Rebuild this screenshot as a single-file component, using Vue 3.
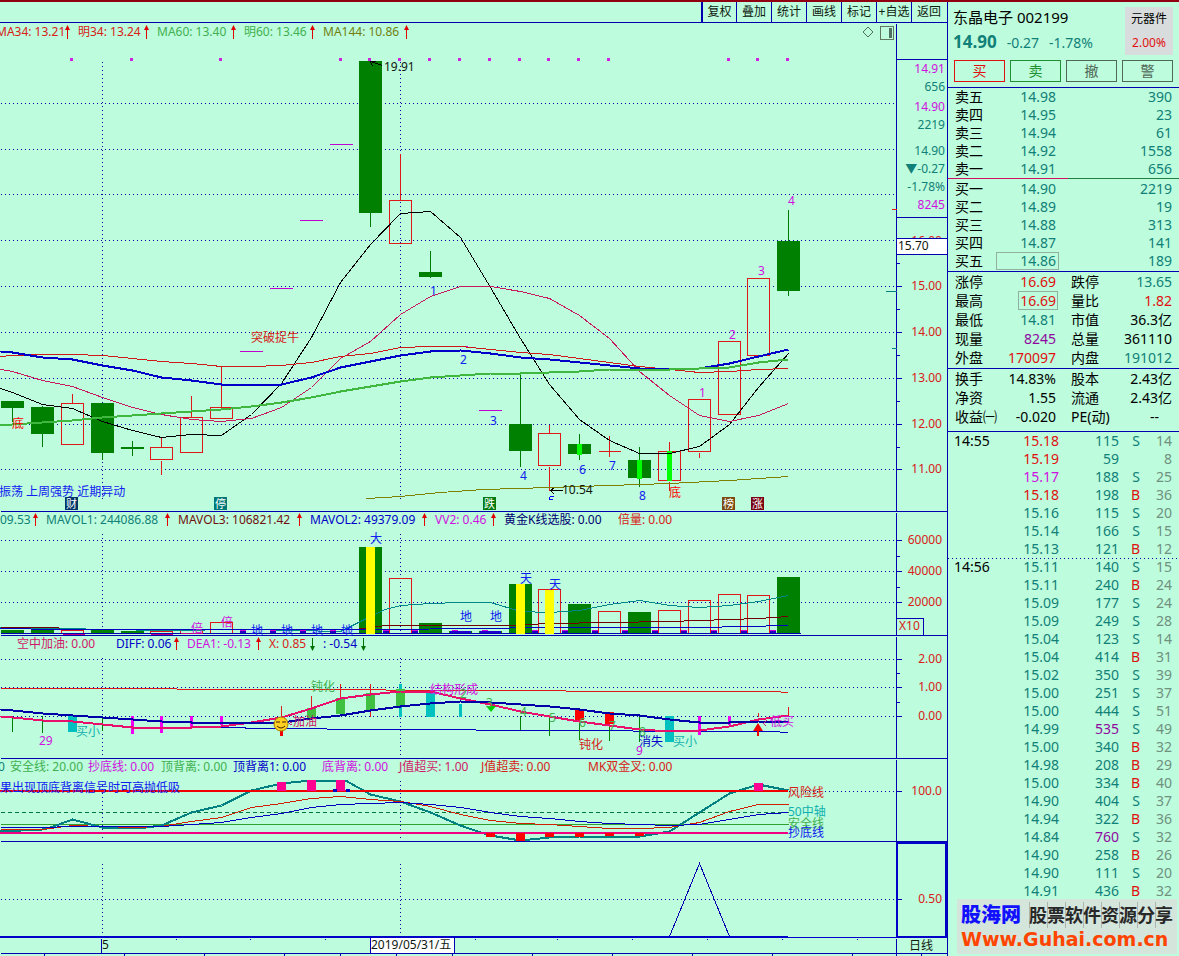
<script setup>
const tools = ['复权', '叠加', '统计', '画线', '标记', '+自选', '返回']

const xs = [12, 42, 72, 102, 132, 161, 191, 221, 251, 281, 311, 340, 370, 400, 430, 460, 490, 520, 549, 579, 609, 639, 669, 699, 729, 758, 788]
const path = (ys, start) => 'M' + (start === undefined ? '' : `0 ${start} L`) + ys.map((y, i) => `${xs[i]} ${y}`).join(' L')
const poly = (pts) => pts.map((p) => p.join(',')).join(' ')

/* centre, body top, body bottom, high, low, up */
const candles = [
  [12, 401, 408, 401, 421, 0], [42, 407, 434, 405, 446, 0], [72, 403, 445, 393, 445, 1], [102, 403, 453, 403, 459, 0],
  [132, 447, 449, 440, 455, 0], [161, 447, 460, 437, 474, 1], [191, 417, 453, 395, 453, 1], [221, 407, 419, 365, 419, 1],
  [370, 61, 213, 61, 226, 0], [400, 200, 244, 153, 244, 1], [430, 272, 277, 250, 277, 0], [520, 424, 451, 373, 466, 0],
  [549, 433, 466, 424, 490, 1], [579, 444, 454, 433, 459, 0], [639, 460, 478, 446, 486, 0],
  [669, 451, 481, 441, 490, 1], [699, 399, 452, 399, 457, 1], [729, 341, 415, 341, 415, 1], [758, 278, 356, 278, 356, 1],
  [788, 241, 291, 209, 295, 0],
].map(([x, t, b, h, l, up]) => ({ x, t, b, h, l, up }))
const limes = [[579, 444, 11], [639, 460, 19], [669, 451, 30]]
const gaps = [[240, 351, 23], [270, 288, 23], [300, 220, 23], [330, 144, 23], [449, 346, 19], [479, 410, 23]]
const marks = [71, 131, 220, 340, 369, 399, 429, 459, 489, 519, 548, 578, 608, 728, 757, 787]

const maBlack = path([392, 404, 408, 421, 430, 437, 434, 435, 414, 383, 337, 282, 244, 213, 211, 237, 287, 338, 384, 419, 440, 453, 453, 446, 424, 387, 353], 388)
const maRose = path([371, 380, 386, 397, 407, 414, 419, 421, 418, 407, 387, 358, 341, 314, 296, 286, 286, 291, 298, 315, 338, 371, 395, 415, 421, 415, 403], 369)
const maRed = path([355, 354, 354, 355, 358, 361, 363, 366, 366, 365, 362, 356, 353, 347, 346, 346, 349, 352, 354, 358, 362, 366, 369, 372, 371, 369, 368], 356)
const maBlue = path([352, 357, 359, 365, 370, 377, 380, 384, 384, 384, 377, 367, 361, 355, 351, 350, 353, 357, 359, 362, 365, 368, 369, 368, 363, 356, 349], 351)
const maGreen = path([424, 422, 420, 417, 415, 413, 411, 409, 406, 402, 397, 391, 386, 381, 377, 375, 373, 373, 372, 371, 369, 369, 369, 368, 367, 362, 359], 425)
const maOlive = poly([[366, 498], [400, 496], [440, 492], [483, 489], [549, 487], [639, 484], [669, 483], [729, 480], [758, 478], [788, 476]])

const priceGrid = [103, 149, 194, 240, 286, 332, 378, 424, 469]
const priceLabels = [[286, '15.00'], [332, '14.00'], [378, '13.00'], [424, '12.00'], [469, '11.00']]
const quote = [[73, '14.91', 'mg'], [91, '656', 'tl'], [111, '14.90', 'mg'], [129, '2219', 'tl'], [155, '14.90', 'tl'], [173, '▼-0.27', 'tl'], [191, '-1.78%', 'tl'], [209, '8245', 'mg']]

/* text x, text, colour class, arrow x, arrow direction */
const legend1 = [
  [-4, 'MA34: 13.21', 'rd', 67], [78, '明34: 13.24', 'rd', 146], [157, 'MA60: 13.40', 'gn', 233],
  [244, '明60: 13.46', 'gn', 312], [323, 'MA144: 10.86', 'ol', 406],
]
const legend2 = [
  [0, '09.53', 'tl', 35], [46, 'MAVOL1: 244086.88', 'tl', 167], [178, 'MAVOL3: 106821.42', 'mr', 299],
  [310, 'MAVOL2: 49379.09', 'bl', 424], [435, 'VV2: 0.46', 'mg', 493], [504, '黄金K线选股: 0.00', 'nv'], [618, '倍量: 0.00', 'rd'],
]
const legend3 = [
  [17, '空中加油: 0.00', 'rs'], [116, 'DIFF: 0.06', 'bl', 176], [187, 'DEA1: -0.13', 'mg', 258], [269, 'X: 0.85', 'rd', 312, 1], [323, ': -0.54', 'bl', 363, 1],
]
const legend4 = [
  [-2, '0', 'tl'], [10, '安全线: 20.00', 'gn'], [88, '抄底线: 0.00', 'mg'], [161, '顶背离: 0.00', 'gn'], [233, '顶背离1: 0.00', 'bl'],
  [322, '底背离: 0.00', 'mg'], [399, 'J值超买: 1.00', 'rs'], [481, 'J值超卖: 0.00', 'rd'], [588, 'MK双金叉: 0.00', 'rd'],
]

const labels1 = [
  [251, 342, '突破捉牛', 'rd'], [430, 295, '1', 'bb'], [460, 364, '2', 'bb'], [490, 425, '3', 'bb'], [520, 480, '4', 'bb'],
  [579, 474, '6', 'bb'], [609, 470, '7', 'bb'], [639, 500, '8', 'bb'], [699, 397, '1', 'mg'], [729, 339, '2', 'mg'],
  [758, 275, '3', 'mg'], [788, 205, '4', 'mg'], [12, 428, '底', 'br'], [669, 497, '底', 'br'],
  [-1, 496, '振荡 上周强势 近期异动', 'bb'], [384, 71, '19.91', 'bk'], [562, 494, '10.54', 'bk'],
]
const badges = [[65, '财', '#003366'], [214, '停', '#007878'], [483, '跌', '#007a10'], [722, '榜', '#7b4a10'], [751, '涨', '#780010']]

/* centre, top, up */
const volumes = [
  [12, 630, 0], [42, 628, 0], [72, 630, 1], [102, 630, 0], [132, 631, 0], [161, 631, 1], [191, 629, 1], [221, 622, 1],
  [370, 547, 0], [400, 578, 1], [430, 623, 0], [460, 631, 0], [490, 631, 0], [520, 584, 0], [549, 589, 1], [579, 604, 0],
  [609, 611, 1], [639, 612, 0], [669, 610, 1], [699, 600, 1], [729, 594, 1], [758, 595, 1], [788, 577, 0],
]
const volYellow = [[366, 547], [516, 584], [545, 590]]
const volTeal = poly([[0, 627], [60, 628], [160, 630], [250, 629], [340, 631], [352, 625], [370, 616], [385, 609], [400, 605], [430, 603], [460, 602], [490, 602], [520, 611], [549, 612], [579, 610], [609, 604], [639, 600], [669, 605], [699, 607], [729, 605], [758, 601], [788, 595]])
const volMaroon = poly([[0, 627], [58, 627], [60, 629], [355, 629], [385, 625], [505, 625], [549, 623], [609, 622], [669, 621], [699, 620], [729, 619], [758, 618], [788, 616]])
const volBlue = poly([[0, 628], [60, 629], [360, 629], [500, 628], [520, 627], [700, 627], [788, 625]])
const volDashes = [240, 270, 300, 330, 383, 412, 452, 482, 532, 562, 592, 622, 652, 681, 711, 741, 770]
const labels2 = [
  [370, 543, '大', 'bb'], [520, 583, '天', 'bb'], [549, 589, '天', 'bb'], [460, 621, '地', 'bb'], [490, 621, '地', 'bb'],
  [251, 635, '地', 'bb'], [281, 635, '地', 'bb'], [311, 635, '地', 'bb'], [341, 635, '地', 'bb'], [191, 633, '倍', 'mg'], [221, 627, '倍', 'mg'],
]

/* x, y, width, height, fill */
const bars3 = [
  [12, 716, 1, 16, '#008000'], [42, 716, 1, 17, '#008000'], [102, 716, 1, 15, '#008000'], [520, 716, 1, 14, '#008000'],
  [549, 716, 1, 20, '#008000'], [579, 716, 1, 24, '#008000'], [609, 716, 1, 25, '#008000'], [639, 716, 1, 26, '#008000'],
  [68, 716, 9, 16, '#00c0c0'], [426, 692, 9, 25, '#00c0c0'], [459, 704, 3, 13, '#00c0c0'], [665, 716, 9, 26, '#00c0c0'],
  [131, 716, 3, 18, '#f000f0'], [160, 716, 3, 17, '#f000f0'], [190, 716, 3, 12, '#f000f0'], [220, 716, 3, 9, '#f000f0'],
  [698, 716, 3, 19, '#f000f0'], [728, 716, 3, 9, '#f000f0'], [307, 708, 9, 10, '#40c040'], [336, 698, 9, 16, '#40c040'],
  [366, 693, 9, 17, '#40c040'], [399, 684, 3, 33, '#00c0c0'], [396, 689, 9, 17, '#40c040'], [575, 709, 9, 11, '#ff0000'],
  [605, 712, 9, 12, '#ff0000'], [281, 706, 1, 12, '#e02020'], [311, 696, 1, 12, '#e02020'], [340, 684, 1, 14, '#e02020'],
  [370, 684, 1, 9, '#e02020'], [370, 710, 1, 7, '#e02020'], [788, 707, 1, 9, '#e02020'], [758, 713, 1, 4, '#e02020'],
]
const diff = path([717, 720, 721, 724, 727, 727, 727, 726, 722, 717, 708, 698, 694, 691, 691, 698, 704, 711, 716, 721, 725, 729, 731, 730, 726, 719, 715], 716)
const dea = path([710, 713, 715, 717, 719, 721, 722, 722, 722, 722, 718, 715, 710, 706, 703, 701, 702, 704, 706, 709, 713, 715, 719, 722, 722, 721, 721], 709)
const upperLine = poly([[0, 688], [176, 688], [177, 689], [385, 689], [386, 690], [565, 690], [566, 691], [772, 691], [788, 692]])
const lowerLine = poly([[161, 727], [326, 728], [327, 729], [475, 729], [476, 730], [625, 730], [640, 731], [770, 731], [788, 732]])
const labels3 = [
  [311, 691, '钝化', 'gn'], [76, 736, '买小', 'cy'], [39, 745, '29', 'mg'], [293, 726, '加油', 'rs'], [430, 694, '结构形成', 'mg'],
  [460, 698, '2', 'gn'], [486, 707, '3', 'gn'], [520, 716, '4', 'gn'], [549, 722, '5', 'gn'], [579, 727, '6', 'gn'], [609, 730, '7', 'gn'],
  [639, 736, '8', 'gn'], [636, 755, '9', 'mg'], [579, 749, '钝化', 'rd'], [639, 746, '消失', 'bl'], [673, 746, '买小', 'cy'], [770, 726, '低买', 'mg'],
]

const kTeal = poly([[0, 831], [42, 829], [50, 827], [72, 819], [102, 827], [145, 827], [161, 825], [191, 812], [221, 805], [251, 790], [281, 783], [311, 780], [345, 780], [370, 794], [400, 801], [430, 812], [460, 825], [480, 832], [490, 835], [520, 840], [549, 837], [579, 836], [639, 836], [669, 831], [699, 812], [729, 793], [758, 784], [788, 790]])
const kRed = path([829, 829, 825, 826, 827, 826, 821, 817, 807, 803, 798, 796, 799, 801, 806, 814, 820, 823, 824, 826, 828, 828, 827, 822, 811, 804, 804], 829)
const kBlue = path([827, 827, 826, 826, 826, 826, 824, 822, 817, 813, 807, 804, 803, 802, 804, 807, 812, 816, 818, 821, 823, 824, 825, 824, 819, 814, 812], 827)
const bars4 = [
  [277, 782, 9, 9, '#ff0090'], [307, 780, 9, 11, '#ff0090'], [336, 780, 9, 11, '#ff0090'], [754, 783, 9, 8, '#ff0090'],
  [333, 789, 4, 3, '#0000c0'], [346, 789, 4, 3, '#0000c0'], [486, 833, 9, 4, '#ff0000'], [516, 833, 9, 8, '#ff0000'], [545, 833, 9, 4, '#ff0000'],
  [575, 833, 9, 4, '#ff0000'], [605, 833, 9, 3, '#ff0000'], [635, 833, 9, 3, '#ff0000'],
]
const labels4 = [
  [0, 792, '果出现顶底背离信号时可高抛低吸', 'bb'], [788, 797, '风险线', 'rd'], [788, 816, '50中轴', 'cy'], [788, 828, '安全线', 'gn'], [788, 837, '抄底线', 'bb'],
]
const dayTicks = [176, 250, 325, 475, 557, 632, 707, 782, 857]
const footTicks = [44, 124, 204, 284, 340, 396, 452, 532, 612, 692, 772, 852, 921]

const sells = [['卖五', '14.98', 390], ['卖四', '14.95', 23], ['卖三', '14.94', 61], ['卖二', '14.92', 1558], ['卖一', '14.91', 656]]
const buys = [['买一', '14.90', 2219], ['买二', '14.89', 19], ['买三', '14.88', 313], ['买四', '14.87', 141], ['买五', '14.86', 189]]
const info1 = [
  ['涨停', '16.69', 'rd', '跌停', '13.65', 'tl'], ['最高', '16.69', 'rd framed', '量比', '1.82', 'rd'], ['最低', '14.81', 'tl', '市值', '36.3亿', 'bk'],
  ['现量', '8245', 'pu', '总量', '361110', 'bk'], ['外盘', '170097', 'rd', '内盘', '191012', 'tl'],
]
const info2 = [
  ['换手', '14.83%', 'bk', '股本', '2.43亿', 'bk'], ['净资', '1.55', 'bk', '流通', '2.43亿', 'bk'], ['收益㈠', '-0.020', 'bk', 'PE(动)', '--', 'bk dash'],
]
const trades = [
  ['14:55', '15.18', 'rd', 115, 'S', 14], ['', '15.19', 'rd', 59, '', 8], ['', '15.17', 'mg', 188, 'S', 25], ['', '15.18', 'rd', 198, 'B', 36],
  ['', '15.16', 'tl', 115, 'S', 20], ['', '15.14', 'tl', 166, 'S', 15], ['', '15.13', 'tl', 121, 'B', 12], ['14:56', '15.11', 'tl', 140, 'S', 15],
  ['', '15.11', 'tl', 240, 'B', 24], ['', '15.09', 'tl', 177, 'S', 24], ['', '15.09', 'tl', 249, 'S', 28], ['', '15.04', 'tl', 123, 'S', 14],
  ['', '15.04', 'tl', 414, 'B', 31], ['', '15.02', 'tl', 350, 'S', 39], ['', '15.00', 'tl', 251, 'S', 37], ['', '15.00', 'tl', 444, 'S', 51],
  ['', '14.99', 'tl', 535, 'S', 49], ['', '15.00', 'tl', 340, 'B', 32], ['', '14.98', 'tl', 208, 'B', 29], ['', '15.00', 'tl', 334, 'B', 40],
  ['', '14.90', 'tl', 404, 'S', 37], ['', '14.94', 'tl', 322, 'B', 36], ['', '14.84', 'tl', 760, 'S', 32], ['', '14.90', 'tl', 258, 'B', 26],
  ['', '14.90', 'tl', 111, 'S', 20], ['', '14.91', 'tl', 436, 'B', 32],
]
</script>

<template>
  <div class="app">
    <main class="left">
      <nav class="toolbar">
        <button v-for="t in tools" :key="t" type="button">{{ t }}</button>
      </nav>

      <!-- price -->
      <svg class="panel" viewBox="0 23 947 489">
        <g transform="translate(0.5 0.5)" class="ln">
          <line v-for="y in priceGrid" :key="y" x1="0" :y1="y" x2="895" :y2="y" class="dots" />
          <line x1="102" y1="61" x2="102" y2="498" class="dots" />
          <line x1="400" y1="61" x2="400" y2="498" class="dots" />
          <path d="M896 23V511M0 511H947M896 59H947M896 217H947" class="rule" />
          <path d="M896 263h3M896 309h3M896 355h3M896 401h3M896 447h3M896 286h5M896 332h5M896 378h5M896 424h5M896 469h5" class="rule" />
          <path d="M891 209h5M598 451h22M609 435V456" stroke="#e01818" />
          <path d="M885 291h11M891 348h5" stroke="#008080" />
          <template v-for="c in candles" :key="c.x">
            <g v-if="c.up" stroke="#e01818">
              <rect :x="c.x - 11" :y="c.t" width="22" :height="c.b - c.t - 1" />
              <path :d="`M${c.x} ${c.h}V${c.t}M${c.x} ${c.b}V${c.l}`" />
            </g>
            <path v-else :d="`M${c.x} ${c.h}V${c.l}`" stroke="#007a00" />
          </template>
        </g>
        <g class="fl">
          <template v-for="c in candles" :key="c.x">
            <rect v-if="!c.up" :x="c.x - 11" :y="c.t" width="23" :height="c.b - c.t" fill="#008000" />
          </template>
          <rect v-for="l in limes" :key="l[0]" :x="l[0] - 2" :y="l[1]" width="5" :height="l[2]" fill="#00ff00" />
          <rect v-for="g in gaps" :key="g[0]" :x="g[0]" :y="g[1]" :width="g[2]" height="1" fill="#c000d0" />
          <rect v-for="m in marks" :key="m" :x="m - 1" y="58" width="3" height="3" fill="#d020e0" />
        </g>
        <g transform="translate(0.5 0.5)" class="ln">
          <path :d="maBlack" stroke="#000" />
          <path :d="maRose" stroke="#c81860" />
          <path :d="maRed" stroke="#d01818" />
          <path :d="maBlue" stroke="#0000c8" stroke-width="2" />
          <path :d="maGreen" stroke="#40b840" stroke-width="2" />
          <polyline :points="maOlive" stroke="#808000" />
          <path d="M370 61L382 65M370 61l5 0M370 61l2 5M550 490h12M550 490l4-3M550 490l4 4" stroke="#000" />
          <path d="M549 496h4M549 496v3h3" stroke="#0000ff" />
        </g>
        <g v-for="l in legend1" :key="l[0]">
          <text :x="l[0]" y="36" :class="l[2]">{{ l[1] }}</text>
          <path :d="`M${l[3]} 39V30h-2l2.500 -5l2.500 5h-2V39z`" fill="#e00000" />
        </g>
        <text v-for="l in labels1" :key="l[0] + l[2]" :x="l[0]" :y="l[1]" :class="l[3]">{{ l[2] }}</text>
        <g v-for="b in badges" :key="b[0]">
          <rect :x="b[0]" y="497" width="13" height="13" :fill="b[2]" />
          <text :x="b[0] + 1" y="508" class="badge">{{ b[1] }}</text>
        </g>
        <path d="M868 27l5 5l-5 5l-5-5z" fill="none" stroke="#507060" />
        <g class="fl">
          <path d="M880 26h14v14h-14zM881 27v12h12v-12z" fill="#607860" fill-rule="evenodd" />
          <rect x="889" y="28" width="3" height="10" fill="#507060" />
        </g>
        <text v-for="q in quote" :key="q[0]" x="945" :y="q[0]" :class="q[2]" class="end">{{ q[1] }}</text>
        <text x="942" y="245" class="rd end">16.00</text>
        <rect x="896" y="238" width="51" height="17" fill="#0000b0" class="fl" />
        <rect x="897" y="239" width="50" height="15" fill="#fff" class="fl" />
        <text x="898" y="250" class="bk">15.70</text>
        <text v-for="p in priceLabels" :key="p[0]" x="942" :y="p[0] + 4" class="rd end">{{ p[1] }}</text>
      </svg>

      <!-- volume -->
      <svg class="panel" viewBox="0 512 947 124">
        <g transform="translate(0.5 0.5)" class="ln">
          <line v-for="y in [540, 571, 602]" :key="y" x1="0" :y1="y" x2="895" :y2="y" class="dots" />
          <line x1="102" y1="533" x2="102" y2="633" class="dots" />
          <line x1="400" y1="533" x2="400" y2="633" class="dots" />
          <path d="M0 635H947M896 512V635M896 540h5M896 571h5M896 602h5M896 556h3M896 587h3M896 618H923V635" class="rule" />
        </g>
        <g class="fl">
          <template v-for="v in volumes" :key="v[0]">
            <path v-if="v[2]" :d="`M${v[0] - 11} 634V${v[1]}h23V634h-1V${v[1] + 1}h-21V634z`" fill="#e01818" />
            <rect v-else :x="v[0] - 11" :y="v[1]" width="23" :height="634 - v[1]" fill="#008000" />
          </template>
        </g>
        <g transform="translate(0.5 0.5)" class="ln">
          <polyline :points="volTeal" stroke="#008888" />
          <polyline :points="volMaroon" stroke="#700000" />
          <polyline :points="volBlue" stroke="#0000c0" />
          <path d="M0 633H800" stroke="#0000b0" />
          <path d="M62 634H84M150 634H172M180 633H202" stroke="#c00080" />
        </g>
        <g class="fl">
          <g v-for="d in volDashes" :key="d">
            <rect :x="d" y="630" width="6" height="1" fill="#d000d0" />
            <rect :x="d" y="631" width="6" height="2" fill="#2000c0" />
          </g>
          <rect v-for="x in [450, 480]" :key="x" :x="x" y="631" width="21" height="2" fill="#2000d0" />
          <rect v-for="y in volYellow" :key="y[0]" :x="y[0]" :y="y[1]" width="9" :height="634 - y[1]" fill="#ffff00" />
        </g>
        <g v-for="l in legend2" :key="l[0]">
          <text :x="l[0]" y="524" :class="l[2]">{{ l[1] }}</text>
          <path v-if="l[3]" :d="`M${l[3]} 526V518h-2l2.500 -5l2.500 5h-2V526z`" fill="#e00000" />
        </g>
        <text v-for="l in labels2" :key="l[0]" :x="l[0]" :y="l[1]" :class="l[3]">{{ l[2] }}</text>
        <text x="942" y="544" class="rd end">60000</text>
        <text x="942" y="575" class="rd end">40000</text>
        <text x="942" y="606" class="rd end">20000</text>
        <text x="899" y="630" class="rd">X10</text>
      </svg>

      <!-- macd -->
      <svg class="panel" viewBox="0 636 947 123">
        <g transform="translate(0.5 0.5)" class="ln">
          <line v-for="y in [659, 687, 716]" :key="y" x1="0" :y1="y" x2="895" :y2="y" class="dots" />
          <line x1="102" y1="657" x2="102" y2="758" class="dots" />
          <line x1="400" y1="657" x2="400" y2="758" class="dots" />
          <path d="M0 758H947M896 636V758M896 659h5M896 687h5M896 716h5M896 673h3M896 702h3" class="rule" />
          <polyline :points="upperLine" stroke="#e01818" />
          <polyline :points="lowerLine" stroke="#0000c0" />
        </g>
        <g class="fl">
          <rect v-for="(b, i) in bars3" :key="i" :x="b[0]" :y="b[1]" :width="b[2]" :height="b[3]" :fill="b[4]" />
        </g>
        <g transform="translate(0.5 0.5)" class="ln">
          <path :d="diff" stroke="#e8106c" stroke-width="2" />
          <path :d="dea" stroke="#0000a8" stroke-width="2" />
          <path d="M292 721l-3 2l3 2M766 720l-3 3l3 3" stroke="#c02080" />
        </g>
        <rect x="280" y="730" width="3" height="6" fill="#f00000" />
        <circle cx="281" cy="724" r="7" fill="#ffd020" stroke="#a08000" />
        <path d="M276 722h4M282 722h4M277 726q4 4 8 0" fill="none" stroke="#402000" />
        <path d="M486 706h10l-5 6z" fill="#00d000" />
        <path d="M758 723l5 8h-4v5h-2v-5h-4z" fill="#f00000" />
        <g v-for="l in legend3" :key="l[0]">
          <text :x="l[0]" y="648" :class="l[2]">{{ l[1] }}</text>
          <path v-if="l[4]" :d="`M${l[3]} 638v8h-2l2.500 5l2.500 -5h-2v-8z`" fill="#007000" />
          <path v-else-if="l[3]" :d="`M${l[3]} 650v-8h-2l2.500 -5l2.500 5h-2v8z`" fill="#e00000" />
        </g>
        <text v-for="(l, i) in labels3" :key="i" :x="l[0]" :y="l[1]" :class="l[3]">{{ l[2] }}</text>
        <text x="942" y="663" class="rd end">2.00</text>
        <text x="942" y="691" class="rd end">1.00</text>
        <text x="942" y="720" class="rd end">0.00</text>
      </svg>

      <!-- kdj -->
      <svg class="panel" viewBox="0 759 947 83">
        <g transform="translate(0.5 0.5)" class="ln">
          <line x1="0" y1="791" x2="895" y2="791" class="dots" />
          <line x1="102" y1="780" x2="102" y2="841" class="dots" />
          <line x1="400" y1="780" x2="400" y2="841" class="dots" />
          <path d="M0 841H947M896 759V841M896 791h5" class="rule" />
          <path d="M0 812H788" stroke="#007840" stroke-dasharray="4 3" />
          <path d="M0 824H788" stroke="#30a030" />
          <polyline :points="kTeal" stroke="#008080" stroke-width="2" />
          <path :d="kRed" stroke="#d02000" />
          <path :d="kBlue" stroke="#0000c0" />
        </g>
        <g class="fl">
          <rect x="0" y="790" width="788" height="2" fill="#f00000" />
          <rect x="0" y="832" width="788" height="2" fill="#f00080" />
          <rect v-for="(b, i) in bars4" :key="i" :x="b[0]" :y="b[1]" :width="b[2]" :height="b[3]" :fill="b[4]" />
        </g>
        <text v-for="l in legend4" :key="l[0]" :x="l[0]" y="771" :class="l[2]">{{ l[1] }}</text>
        <text v-for="l in labels4" :key="l[2]" :x="l[0]" :y="l[1]" :class="l[3]">{{ l[2] }}</text>
        <text x="942" y="795" class="rd end">100.0</text>
      </svg>

      <!-- signal -->
      <svg class="panel" viewBox="0 842 947 96">
        <g transform="translate(0.5 0.5)" class="ln">
          <line x1="0" y1="899" x2="895" y2="899" class="dots" />
          <line x1="102" y1="863" x2="102" y2="936" class="dots" />
          <line x1="400" y1="863" x2="400" y2="936" class="dots" />
          <path d="M669 936L699 863L729 936M896 899h5" class="rule" />
        </g>
        <g class="fl" fill="#0000c8">
          <rect x="0" y="936" width="788" height="1" />
          <rect x="0" y="937" width="947" height="1" />
          <path d="M896 842h51v96h-51zM898 844v92h47v-92z" fill-rule="evenodd" />
        </g>
        <text x="942" y="903" class="rd end">0.50</text>
      </svg>

      <!-- dates -->
      <svg class="panel" viewBox="0 938 947 18">
        <g transform="translate(0.5 0.5)" class="ln">
          <path d="M0 953H947M101 938V953M896 938V956" class="rule" />
          <path v-for="t in dayTicks" :key="t" :d="`M${t} 938v1`" class="rule" />
          <path v-for="t in footTicks" :key="t" :d="`M${t} 953v3`" class="rule" />
        </g>
        <g class="fl">
          <rect x="370" y="938" width="85" height="15" fill="#0000b0" />
          <rect x="371" y="938" width="83" height="15" fill="#fff" />
        </g>
        <text x="102" y="949" class="bk">5</text>
        <text x="371" y="949" class="bk">2019/05/31/五</text>
        <text x="909" y="950" class="bk">日线</text>
      </svg>
    </main>

    <aside class="side">
      <header class="head">
        <div class="title">
          <h1>东晶电子 002199</h1>
          <p><b>14.90</b><span>-0.27</span><span>-1.78%</span></p>
        </div>
        <div class="sector"><span>元器件</span><span class="rd">2.00%</span></div>
      </header>
      <div class="actions">
        <button type="button" class="buy">买</button>
        <button type="button" class="sell">卖</button>
        <button type="button">撤</button>
        <button type="button">警</button>
      </div>

      <table class="book">
        <tbody>
          <tr v-for="s in sells" :key="s[0]"><th scope="row">{{ s[0] }}</th><td>{{ s[1] }}</td><td>{{ s[2] }}</td></tr>
        </tbody>
      </table>
      <div class="split"></div>
      <table class="book bids">
        <tbody>
          <tr v-for="s in buys" :key="s[0]"><th scope="row">{{ s[0] }}</th><td><span :class="{ sel: s[0] === '买五' }">{{ s[1] }}</span></td><td>{{ s[2] }}</td></tr>
        </tbody>
      </table>

      <table v-for="(rows, n) in [info1, info2]" :key="n" class="info" :class="{ last: n === 1 }">
        <tbody>
          <tr v-for="r in rows" :key="r[0]">
            <th scope="row">{{ r[0] }}</th>
            <td><span :class="r[2]">{{ r[1] }}</span></td>
            <th scope="row">{{ r[3] }}</th>
            <td><span :class="r[5]">{{ r[4] }}</span></td>
          </tr>
        </tbody>
      </table>

      <div class="tape">
        <table class="trades">
          <tbody>
            <tr v-for="(t, i) in trades" :key="i" :class="{ minute: t[0] && i }">
              <td>{{ t[0] }}</td>
              <td :class="t[2]">{{ t[1] }}</td>
              <td :class="t[3] > 500 ? 'pu' : 'tl'">{{ t[3] }}</td>
              <td :class="t[4] === 'B' ? 'rd' : 'tl'">{{ t[4] }}</td>
              <td class="gy">{{ t[5] }}</td>
            </tr>
          </tbody>
        </table>
        <div class="mark">
          <div class="row"><strong>股海网</strong><em>股票软件资源分享</em></div>
          <a href="#">Www.Guhai.com.cn</a>
        </div>
      </div>
    </aside>
  </div>
</template>

<style>
html, body { background: #bdfcdc; }
</style>

<style scoped>
.app {
  display: flex;
  align-items: stretch;
  border-top: 2px solid #900010;
  background: #bdfcdc;
  color: #000;
  font-family: "Noto Sans", "Noto Sans CJK SC", sans-serif;
  font-size: 14px;
}
.left { flex: 1; min-width: 0; border-right: 1px solid #0000b0; }
.toolbar { display: flex; justify-content: flex-end; height: 20px; padding-right: 1px; border-bottom: 1px solid #0000b0; }
.toolbar button {
  width: 35px; padding: 0; border: 0; border-left: 1px solid #0000b0; background: none;
  font: inherit; font-size: 12px; line-height: 18px; color: #102010; white-space: nowrap;
}
.toolbar button:first-child { border-left-width: 2px; }
.panel { display: block; width: 100%; height: auto; overflow: hidden; font-size: 12px; }
.ln { fill: none; stroke-width: 1; shape-rendering: crispEdges; }
.fl { shape-rendering: crispEdges; }
.dots { stroke: #0000a0; stroke-dasharray: 1 3; }
.rule { stroke: #0000b0; }
.end { text-anchor: end; }
.badge { fill: #fff; font-size: 11px; }

.rd { color: #e01010; fill: #d82018; }
.br { fill: #ff0000; }
.gn { fill: #40b050; }
.ol { fill: #708010; }
.tl { color: #108078; fill: #108078; }
.cy { fill: #10b0b0; }
.mr { fill: #701010; }
.nv { fill: #000070; }
.bl { fill: #0000c8; }
.bb { fill: #1020f0; }
.rs { fill: #d01868; }
.mg { color: #d010e0; fill: #d010e0; }
.pu { color: #9008a0; }
.gy { color: #709080; }
.bk { color: #000; fill: #101810; }

.side { flex: 0 0 231px; min-width: 0; display: flex; flex-direction: column; }
.head { display: flex; justify-content: space-between; box-sizing: border-box; padding: 5px 6px 0 5px; height: 53px; }
.title h1 { margin: 0; font-size: 15px; line-height: 20px; font-weight: 400; }
.title p { display: flex; gap: 10px; align-items: baseline; margin: 2px 0 0; line-height: 26px; color: #108078; }
.title b { font-size: 17px; }
.sector { display: flex; flex-direction: column; align-items: center; width: 48px; height: 48px; background: #d8dcdc; font-size: 12px; line-height: 24px; }
.actions { display: grid; grid-template-columns: repeat(4, 1fr); gap: 5px; padding: 5px 6px; border-bottom: 1px solid #0000b0; }
.actions button { height: 22px; padding: 0; border: 1px solid #506858; background: none; color: #506858; font: inherit; line-height: 18px; }
.actions .buy { color: #e01010; border-color: #e01010; }
.actions .sell { color: #209030; border-color: #209030; }

table { width: 100%; border-collapse: separate; border-spacing: 0; table-layout: fixed; }
th, td { padding: 0; font-weight: 400; white-space: nowrap; text-align: left; }
.book tr { height: 18px; }
.book th, .book td { line-height: 18px; height: 18px; }
.book th { width: 40px; padding-left: 7px; }
.book td { text-align: right; color: #108078; }
.book td:nth-child(2) { width: 61px; }
.book td:last-child { padding-right: 7px; }
.split { height: 1px; background: linear-gradient(to right, #d01060 52%, #208040 52%); }
.bids { padding: 1px 0; border-bottom: 1px solid #0000b0; }
.sel { display: inline-block; box-sizing: border-box; width: 63px; height: 18px; line-height: 16px; border: 1px solid #90b0a0; padding-right: 2px; margin-right: -3px; }
.info { padding-bottom: 1px; border-bottom: 1px solid #0000b0; }
.last { padding-bottom: 5px; }
.info th, .info td { height: 19px; line-height: 19px; }
.info th:first-child { width: 40px; padding-left: 7px; }
.info td { text-align: right; }
.info td:nth-child(2) { width: 61px; }
.info th:nth-child(3) { width: 48px; padding-left: 15px; }
.info td:last-child { padding-right: 7px; }
.framed { display: inline-block; box-sizing: border-box; height: 19px; line-height: 17px; border: 1px solid #90b0a0; padding: 0 1px; margin-right: -2px; }
.dash { padding-right: 13px; }
.tape { position: relative; flex: 1; }
.trades td { height: 18px; line-height: 18px; text-align: right; box-sizing: border-box; }
.trades td:first-child { width: 46px; padding-left: 6px; text-align: left; }
.trades td:nth-child(2) { width: 65px; }
.trades td:nth-child(3) { width: 60px; }
.trades td:nth-child(4) { width: 21px; }
.trades td:last-child { padding-right: 7px; }
.minute { background: repeating-linear-gradient(to right, #0000a0 0 1px, transparent 1px 4px) top / 100% 1px no-repeat; }
.mark { position: absolute; right: 2px; bottom: 2px; width: 220px; height: 55px; box-sizing: border-box; padding: 3px 4px 0; background: rgba(216, 224, 220, 0.85); overflow: hidden; }
.row { display: flex; justify-content: space-between; align-items: center; height: 26px; }
.mark strong { color: #1010ff; font-size: 20px; font-weight: 900; line-height: 26px; }
.mark em { color: #282828; font-size: 18px; font-style: normal; font-weight: 700; line-height: 26px; background: repeating-linear-gradient(to right, #b0b4b0 0 1px, transparent 1px 18px); }
.mark a { display: block; color: #ff4400; font: bold 19px/22px "DejaVu Sans", sans-serif; text-decoration: none; }
</style>
